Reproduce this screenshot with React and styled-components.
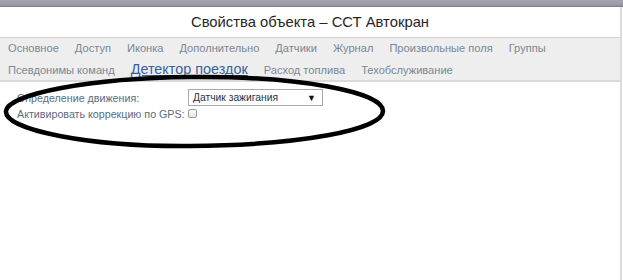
import React from "react";
import styled, { createGlobalStyle } from "styled-components";

const GlobalStyle = createGlobalStyle`
  html, body { margin: 0; padding: 0; background: #ffffff; }
  body { font-family: "Liberation Sans", Arial, sans-serif; }
  * { box-sizing: border-box; }
`;

const Page = styled.div`
  position: relative;
  width: 623px;
  height: 280px;
  overflow: hidden;
  background: #fff;
`;

const TopStrip = styled.div`
  height: 7px;
  background: linear-gradient(180deg, #a6a4b0 0%, #9c9aa8 70%, #7f7d8c 100%);
`;

const Window = styled.div`
  width: 622px;
  height: 273px;
  border-right: 2px solid #dcdcdc;
  display: flex;
  flex-direction: column;
`;

const Header = styled.div`
  height: 31px;
  border-bottom: 1px solid #d2d2d2;
  display: flex;
  align-items: center;
  justify-content: center;
`;

const Title = styled.div`
  font-size: 14.8px;
  color: #262626;
`;

const Tabs = styled.div`
  height: 44px;
  background: #eeeeee;
  border-bottom: 2px solid #d9d9d9;
  display: flex;
  flex-direction: column;
`;

const TabRow = styled.div`
  display: flex;
  align-items: baseline;
  height: 21px;
  line-height: 21px;
`;

const Tab = styled.span`
  padding: 0 8px;
  font-size: ${(p) => (p.$active ? "14.4px" : "11.1px")};
  color: ${(p) => (p.$active ? "#3b5fa0" : "#7a8794")};
  text-decoration: ${(p) => (p.$active ? "underline" : "none")};
  white-space: nowrap;
`;

const Content = styled.div`
  position: relative;
  flex: 1;
  padding: 7px 0 0 17px;
  display: flex;
  flex-direction: column;
`;

const FormRow = styled.div`
  display: flex;
  align-items: center;
  height: ${(p) => p.$h || 15}px;
`;

const Label = styled.span`
  font-size: 10.7px;
  color: #5b6c80;
  width: ${(p) => (p.$w ? `${p.$w}px` : "auto")};
  white-space: nowrap;
`;

const Select = styled.div`
  width: 135px;
  height: 17px;
  border: 1px solid #a8a8a8;
  background: #fff;
  display: flex;
  align-items: center;
  justify-content: space-between;
  padding: 0 6px 0 4px;
  font-size: 10.3px;
  color: #2a3342;
`;

const Arrow = styled.span`
  font-size: 9px;
  color: #111;
`;

const Checkbox = styled.span`
  display: inline-block;
  width: 9px;
  height: 9px;
  margin-left: 3px;
  border: 1px solid #9a9a9a;
  border-radius: 2px;
  background: linear-gradient(#fafafa, #e6e6e6);
`;

const Annotation = styled.svg`
  position: absolute;
  left: 0;
  top: 0;
  pointer-events: none;
`;

export default function App() {
  return (
    <Page>
      <GlobalStyle />
      <TopStrip />
      <Window>
        <Header>
          <Title>Свойства объекта – ССТ Автокран</Title>
        </Header>
        <Tabs>
          <TabRow>
            <Tab>Основное</Tab>
            <Tab>Доступ</Tab>
            <Tab>Иконка</Tab>
            <Tab>Дополнительно</Tab>
            <Tab>Датчики</Tab>
            <Tab>Журнал</Tab>
            <Tab>Произвольные поля</Tab>
            <Tab>Группы</Tab>
          </TabRow>
          <TabRow>
            <Tab>Псевдонимы команд</Tab>
            <Tab $active>Детектор поездок</Tab>
            <Tab>Расход топлива</Tab>
            <Tab>Техобслуживание</Tab>
          </TabRow>
        </Tabs>
        <Content>
          <FormRow $h={17}>
            <Label $w={171}>Определение движения:</Label>
            <Select>
              <span>Датчик зажигания</span>
              <Arrow>▼</Arrow>
            </Select>
          </FormRow>
          <FormRow>
            <Label>Активировать коррекцию по GPS:</Label>
            <Checkbox />
          </FormRow>
        </Content>
      </Window>
      <Annotation width="623" height="280" viewBox="0 0 623 280">
        <path
          d="M 6 111 C 8 94, 90 78, 190 77 C 300 76, 383 92, 383 111 C 383 130, 300 145, 190 146 C 90 147, 4 130, 6 111 Z"
          fill="none"
          stroke="#000"
          strokeWidth="4.5"
        />
      </Annotation>
    </Page>
  );
}
